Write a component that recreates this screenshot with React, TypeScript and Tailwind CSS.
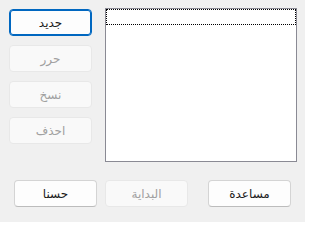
import React from "react";

const font = { fontFamily: '"DejaVu Sans", sans-serif' };

function Btn({ label, disabled, focused, className = "" }: { label: string; disabled?: boolean; focused?: boolean; className?: string }) {
  let cls = "flex items-center justify-center rounded-[4px] text-[12px] leading-none w-[83px] h-[27px] ";
  if (focused) {
    cls += "bg-[#fdfdfd] border border-[#0067c0] shadow-[inset_0_0_0_1px_#0067c0] text-[#1a1a1a]";
  } else if (disabled) {
    cls += "bg-[#f9f9f9] border border-[#e8e8e8] text-[#a0a0a0]";
  } else {
    cls += "bg-[#fdfdfd] border border-[#d4d4d4] border-b-[#bcbcbc] text-[#1a1a1a]";
  }
  return (
    <div className={cls + " " + className} dir="rtl">
      <span>{label}</span>
    </div>
  );
}

export default function App() {
  return (
    <div className="w-[305px] h-[222px] bg-[#f0f0f0] overflow-hidden flex flex-col" style={font}>
      <div className="flex flex-row pt-[8px]">
        <div className="flex flex-col gap-[9px] ml-[9px] mt-[1px]">
          <Btn label="جديد" focused />
          <Btn label="حرر" disabled />
          <Btn label="نسخ" disabled />
          <Btn label="احذف" disabled />
        </div>
        <div className="ml-[13px] w-[192px] h-[154px] bg-white border border-[#8a8a94] flex flex-col">
          <div className="h-[16px] w-full border border-dotted border-black"></div>
        </div>
      </div>
      <div className="flex flex-row mt-[18px] ml-[14px]">
        <Btn label="حسنا" />
        <Btn label="البداية" disabled className="ml-[8px]" />
        <Btn label="مساعدة" className="ml-[20px]" />
      </div>
    </div>
  );
}
